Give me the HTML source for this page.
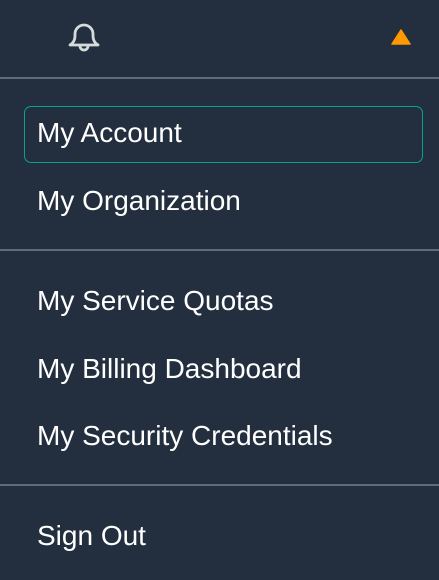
<!DOCTYPE html>
<html><head><style>
body{margin:0;width:439px;height:580px;background:#232f3e;position:relative;overflow:hidden;font-family:"Liberation Sans",Arial,sans-serif;color:#fff}
.hr{position:absolute;left:0;width:439px;height:2px;background:#5f6b7a}
.t{position:absolute;left:37px;font-size:28px;line-height:30px;white-space:nowrap}
.box{position:absolute;left:24px;top:106px;width:397px;height:55px;border:1px solid #01a88d;border-radius:7px}
</style></head><body>
<svg style="position:absolute;left:66px;top:20px" width="36" height="36" viewBox="0 0 36 36">
<path d="M4 25 Q9 22 9 16 V14 A9 9 0 0 1 27 14 V16 Q27 22 32 25 Z" fill="none" stroke="#d5dbdb" stroke-width="2.8" stroke-linejoin="round"/>
<path d="M14 26 A4 4 0 0 0 22 26" fill="none" stroke="#d5dbdb" stroke-width="2.8"/>
</svg>
<svg style="position:absolute;left:391px;top:29px" width="20" height="16" viewBox="0 0 20 16"><path d="M10 1 L19 15 H1 Z" fill="#ff9900" stroke="#ff9900" stroke-linejoin="round" stroke-width="1.5"/></svg>
<div class="hr" style="top:77px"></div>
<div class="box"></div>
<div class="t" style="top:118px">My Account</div>
<div class="t" style="top:186px">My Organization</div>
<div class="hr" style="top:249px"></div>
<div class="t" style="top:286px">My Service Quotas</div>
<div class="t" style="top:354px">My Billing Dashboard</div>
<div class="t" style="top:421px">My Security Credentials</div>
<div class="hr" style="top:484px"></div>
<div class="t" style="top:521px">Sign Out</div>
</body></html>
